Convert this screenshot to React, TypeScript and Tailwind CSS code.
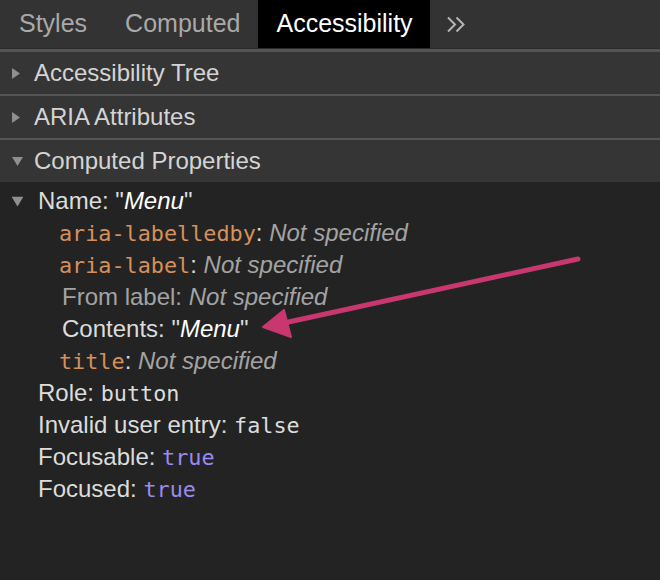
import React from "react";

const sans = "font-['Liberation_Sans','Helvetica_Neue',Arial,sans-serif]";
const mono = "font-['DejaVu_Sans_Mono',Menlo,monospace] text-[21.8px]";

function Caret({ open, className = "" }: { open?: boolean; className?: string }) {
  // small grey disclosure triangle
  return open ? (
    <svg width="11" height="9" viewBox="0 0 11 9" className={className}>
      <path d="M0 0 L11 0 L5.5 9 Z" fill="#8f8f8f" />
    </svg>
  ) : (
    <svg width="8" height="11" viewBox="0 0 8 11" className={className}>
      <path d="M0 0 L8 5.5 L0 11 Z" fill="#8f8f8f" />
    </svg>
  );
}

const sections = [
  { title: "Accessibility Tree", open: false },
  { title: "ARIA Attributes", open: false },
  { title: "Computed Properties", open: true },
];

const NotSpecified = () => <span className="italic text-[#a3a3a3]">Not specified</span>;

export default function App() {
  return (
    <div className={`relative w-[660px] h-[580px] overflow-hidden bg-[#232323] ${sans} text-[24px] text-[#dcdcdc]`}>
      {/* tab strip */}
      <div className="flex h-[48px] bg-[#333333] items-stretch text-[25px]">
        <div className="flex items-center px-[19px] text-[#a9a9a9]">Styles</div>
        <div className="flex items-center pl-[19px] pr-[18px] text-[#a9a9a9]">Computed</div>
        <div className="flex items-center pl-[18px] pr-[17px] bg-black text-white">Accessibility</div>
        <div className="flex items-center pl-[16px]">
          <svg width="20" height="17" viewBox="0 0 20 17" fill="none" stroke="#b5b5b5" strokeWidth="2">
            <path d="M2 1.5 L9 8.5 L2 15.5" />
            <path d="M10.5 1.5 L17.5 8.5 L10.5 15.5" />
          </svg>
        </div>
      </div>

      {/* collapsible panes */}
      {sections.map((s, i) => (
        <div key={s.title}>
          {i === 0 && <div className="h-px bg-[#2a2a2a]" />}
          <div className={i === 0 ? "h-[3px] bg-[#555555]" : "h-[2px] bg-[#555555]"} />
          <div className="flex items-center h-[42px] bg-[#353535] pl-[12px] text-[#d4d4d4]">
            <div className="w-[22px] flex items-center">
              <Caret open={s.open} />
            </div>
            {s.title}
          </div>
        </div>
      ))}

      {/* computed properties */}
      <div className="pt-[3px] leading-[32px]">
        <div className="flex items-center h-[32px] pl-[12px]">
          <div className="w-[26px] flex items-center">
            <Caret open className="scale-110" />
          </div>
          <span>
            Name: "<span className="italic text-white">Menu</span>"
          </span>
        </div>
        <div className="h-[32px] pl-[59px]">
          <span className={`${mono} text-[#d6915a]`}>aria-labelledby</span>: <NotSpecified />
        </div>
        <div className="h-[32px] pl-[59px]">
          <span className={`${mono} text-[#d6915a]`}>aria-label</span>: <NotSpecified />
        </div>
        <div className="h-[32px] pl-[62px] text-[#a3a3a3]">
          From label: <NotSpecified />
        </div>
        <div className="h-[32px] pl-[62px]">
          Contents: "<span className="italic text-white">Menu</span>"
        </div>
        <div className="h-[32px] pl-[59px]">
          <span className={`${mono} text-[#d6915a]`}>title</span>: <NotSpecified />
        </div>
        <div className="h-[32px] pl-[38px]">
          Role: <span className={mono}>button</span>
        </div>
        <div className="h-[32px] pl-[38px]">
          Invalid user entry: <span className={mono}>false</span>
        </div>
        <div className="h-[32px] pl-[38px]">
          Focusable: <span className={`${mono} text-[#9b8af0]`}>true</span>
        </div>
        <div className="h-[32px] pl-[38px]">
          Focused: <span className={`${mono} text-[#9b8af0]`}>true</span>
        </div>
      </div>

      {/* annotation arrow */}
      <svg className="absolute left-0 top-0 pointer-events-none" width="660" height="580" viewBox="0 0 660 580">
        <line x1="578" y1="259" x2="284" y2="323" stroke="#c8376f" strokeWidth="5" strokeLinecap="round" />
        <path d="M263 327 L284 310 L291 337 Z" fill="#c8376f" stroke="#c8376f" strokeWidth="2" strokeLinejoin="round" />
      </svg>
    </div>
  );
}
